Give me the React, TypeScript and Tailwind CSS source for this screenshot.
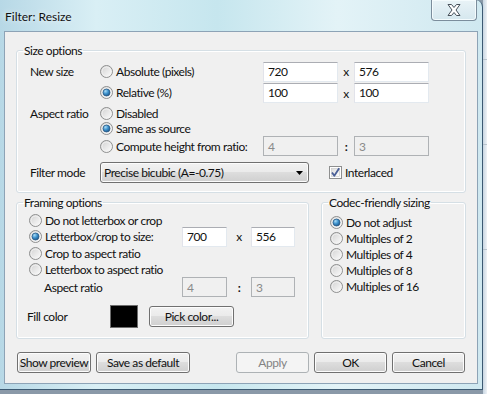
import React from "react";

function Radio({ checked }: { checked?: boolean }) {
  return (
    <svg width="13" height="13" viewBox="0 0 13 13" className="shrink-0">
      <defs>
        <linearGradient id="rg-bg" x1="0" y1="0" x2="1" y2="1">
          <stop offset="0" stopColor="#cfcfcf" />
          <stop offset="1" stopColor="#ffffff" />
        </linearGradient>
        <radialGradient id="rg-dot" cx="0.35" cy="0.3" r="0.8">
          <stop offset="0" stopColor="#a8dcf7" />
          <stop offset="0.5" stopColor="#3a8fcb" />
          <stop offset="1" stopColor="#1c4f80" />
        </radialGradient>
      </defs>
      <circle cx="6.5" cy="6.5" r="6" fill="url(#rg-bg)" stroke="#8e8f8f" strokeWidth="1" />
      <circle cx="6.5" cy="6.5" r="4.5" fill="none" stroke="#f4f4f4" strokeWidth="1" opacity="0.8" />
      {checked && <circle cx="6.5" cy="6.5" r="3.5" fill="url(#rg-dot)" stroke="#2a5a86" strokeWidth="0.8" />}
    </svg>
  );
}

function RadioItem({ checked, label }: { checked?: boolean; label: string }) {
  return (
    <div className="flex items-center gap-[3px] whitespace-nowrap">
      <Radio checked={checked} />
      <span>{label}</span>
    </div>
  );
}

function Field({ value, disabled, w }: { value: string; disabled?: boolean; w: string }) {
  return (
    <div
      className={
        "h-[20px] flex items-center pl-[4px] border shrink-0 " +
        w +
        (disabled
          ? " bg-[#f0f0f0] border-[#afb2b5] text-[#8a8a8a]"
          : " bg-white border-[#abadb3] border-r-[#e3e9ef] border-b-[#e3e9ef] border-l-[#e2e3ea]")
      }
    >
      {value}
    </div>
  );
}

function Btn({ label, w, disabled }: { label: string; w: string; disabled?: boolean }) {
  return (
    <div
      className={
        "h-[21px] flex items-center justify-center rounded-[3px] border shrink-0 whitespace-nowrap " +
        w +
        (disabled
          ? " border-[#adb2b5] bg-[#f4f4f4] text-[#838383]"
          : " border-[#707070] bg-[linear-gradient(#f2f2f2_0%,#ebebeb_45%,#dddddd_50%,#cfcfcf_100%)] shadow-[inset_0_0_0_1px_#fcfcfc]")
      }
    >
      {label}
    </div>
  );
}

function Group({ title, w, children }: { title: string; w: string; children: React.ReactNode }) {
  return (
    <fieldset className={"border border-[#d5dfe5] rounded-[3px] shadow-[inset_0_0_0_1px_#ffffff] p-0 m-0 min-w-0 shrink-0 " + w}>
      <legend className="ml-[6px] px-[1px] leading-[15px]">{title}</legend>
      {children}
    </fieldset>
  );
}

export default function App() {
  return (
    <div
      className="w-[487px] h-[394px] overflow-hidden flex bg-[#8a99a8] text-[12px] leading-[15px] text-[#111]"
      style={{ fontFamily: "Lato, 'Noto Sans', sans-serif" }}
    >
      {/* window */}
      <div className="w-[483px] h-[390px] shrink-0 flex flex-col rounded-tr-[7px] border-r border-b border-[#3c5a73] bg-[linear-gradient(90deg,#b7d8e6_0%,#d9eff5_20%,#c6e6ee_45%,#e3f3f7_70%,#cfe8f0_100%)]">
        {/* title bar */}
        <div className="h-[31px] shrink-0 flex items-start">
          <div className="pl-[5px] pt-[9px] text-[12px] whitespace-nowrap [text-shadow:0_0_6px_#ffffff]">Filter: Resize</div>
          <div className="ml-auto mr-[5px] w-[46px] h-[21px] rounded-b-[4px] border border-t-0 border-[#7b8d9c] bg-[linear-gradient(#e9f3f7,#d5e7ee)] shadow-[inset_0_0_0_1px_#f4fbfd] flex items-center justify-center">
            <svg width="16" height="14" viewBox="0 0 16 14">
              <path
                d="M2 1.5 L5.5 1.5 L8 4.5 L10.5 1.5 L14 1.5 L10 7 L14 12.5 L10.5 12.5 L8 9.5 L5.5 12.5 L2 12.5 L6 7 Z"
                fill="#ffffff"
                stroke="#47505a"
                strokeWidth="1"
                strokeLinejoin="round"
              />
            </svg>
          </div>
        </div>
        {/* client */}
        <div className="ml-[4px] w-[474px] h-[353px] shrink-0 bg-[#f0f0f0] border border-[#8da3b6] flex flex-col pl-[11px] pt-[11px] tracking-[-0.45px]">
          {/* Size options */}
          <Group title="Size options" w="w-[450px]">
            <div className="pl-[13px] pb-[9px] flex flex-col">
              <div className="mt-[3px] h-[21px] flex items-center">
                <div className="w-[70px]">New size</div>
                <div className="w-[163px]"><RadioItem label="Absolute (pixels)" /></div>
                <Field value="720" w="w-[75px]" />
                <div className="w-[16px] text-center">x</div>
                <Field value="576" w="w-[75px]" />
              </div>
              <div className="h-[21px] flex items-center">
                <div className="w-[70px]" />
                <div className="w-[163px]"><RadioItem checked label="Relative (%)" /></div>
                <Field value="100" w="w-[75px]" />
                <div className="w-[16px] text-center pt-[2px]">x</div>
                <Field value="100" w="w-[75px]" />
              </div>
              <div className="mt-[2px] h-[16px] flex items-center">
                <div className="w-[70px]">Aspect ratio</div>
                <RadioItem label="Disabled" />
              </div>
              <div className="h-[15px] flex items-center">
                <div className="w-[70px]" />
                <RadioItem checked label="Same as source" />
              </div>
              <div className="h-[20px] flex items-center">
                <div className="w-[70px]" />
                <div className="w-[163px]"><RadioItem label="Compute height from ratio:" /></div>
                <Field value="4" disabled w="w-[75px]" />
                <div className="w-[16px] text-center font-bold">:</div>
                <Field value="3" disabled w="w-[75px]" />
              </div>
              <div className="mt-[6px] h-[21px] flex items-center">
                <div className="w-[70px]">Filter mode</div>
                <div className="w-[209px] h-[21px] rounded-[3px] border border-[#707070] bg-[linear-gradient(#f2f2f2_0%,#ebebeb_45%,#dddddd_50%,#cfcfcf_100%)] shadow-[inset_0_0_0_1px_#fcfcfc] flex items-center pl-[3px] pr-[5px] whitespace-nowrap">
                  <span>Precise bicubic (A=-0.75)</span>
                  <svg width="7" height="4" viewBox="0 0 7 4" className="ml-auto">
                    <path d="M0 0 H7 L3.5 4 Z" fill="#000" />
                  </svg>
                </div>
                <div className="ml-[20px] flex items-center gap-[3px]">
                  <svg width="13" height="13" viewBox="0 0 13 13">
                    <defs>
                      <linearGradient id="cb-bg" x1="0" y1="0" x2="1" y2="1">
                        <stop offset="0" stopColor="#dcdcdc" />
                        <stop offset="1" stopColor="#ffffff" />
                      </linearGradient>
                    </defs>
                    <rect x="0.5" y="0.5" width="12" height="12" fill="#ffffff" stroke="#8e8f8f" />
                    <rect x="2.5" y="2.5" width="8" height="8" fill="url(#cb-bg)" stroke="#c6c6c6" strokeWidth="0.6" />
                    <path d="M3 6.5 L5.3 9.8 L10.2 2.2" fill="none" stroke="#4a5f97" strokeWidth="1.8" strokeLinejoin="round" />
                  </svg>
                  <span>Interlaced</span>
                </div>
              </div>
            </div>
          </Group>

          <div className="mt-[2px] flex gap-[12px]">
            {/* Framing options */}
            <Group title="Framing options" w="w-[293px]">
              <div className="pl-[12px] pt-[2px] pb-[11px] flex flex-col">
                <div className="h-[16px] flex items-center"><RadioItem label="Do not letterbox or crop" /></div>
                <div className="h-[17px] flex items-center">
                  <div className="w-[153px]"><RadioItem checked label="Letterbox/crop to size:" /></div>
                  <Field value="700" w="w-[45px]" />
                  <div className="w-[24px] text-center">x</div>
                  <Field value="556" w="w-[44px]" />
                </div>
                <div className="h-[16px] flex items-center"><RadioItem label="Crop to aspect ratio" /></div>
                <div className="h-[16px] flex items-center"><RadioItem label="Letterbox to aspect ratio" /></div>
                <div className="h-[20px] flex items-center">
                  <div className="w-[153px] pl-[15px]">Aspect ratio</div>
                  <Field value="4" disabled w="w-[45px]" />
                  <div className="w-[24px] text-center font-bold">:</div>
                  <Field value="3" disabled w="w-[44px]" />
                </div>
                <div className="mt-[8px] h-[22px] flex items-center">
                  <div className="w-[83px] -ml-[2px]">Fill color</div>
                  <div className="w-[28px] h-[23px] bg-black border border-[#6d6d6d]" />
                  <Btn label="Pick color..." w="w-[85px] ml-[11px]" />
                </div>
              </div>
            </Group>

            {/* Codec-friendly sizing */}
            <Group title="Codec-friendly sizing" w="w-[145px]">
              <div className="pl-[8px] pt-[4px] flex flex-col">
                <div className="h-[16px] flex items-center"><RadioItem checked label="Do not adjust" /></div>
                <div className="h-[16px] flex items-center"><RadioItem label="Multiples of 2" /></div>
                <div className="h-[16px] flex items-center"><RadioItem label="Multiples of 4" /></div>
                <div className="h-[16px] flex items-center"><RadioItem label="Multiples of 8" /></div>
                <div className="h-[16px] flex items-center"><RadioItem label="Multiples of 16" /></div>
              </div>
            </Group>
          </div>

          {/* buttons */}
          <div className="mt-[13px] flex items-center pl-[1px] pr-[12px]">
            <Btn label="Show preview" w="w-[74px]" />
            <Btn label="Save as default" w="w-[94px] ml-[5px]" />
            <Btn label="Apply" disabled w="w-[73px] ml-[46px]" />
            <Btn label="OK" w="w-[73px] ml-[5px]" />
            <Btn label="Cancel" w="w-[73px] ml-[5px]" />
          </div>
        </div>
      </div>
      {/* window behind */}
      <div className="flex-1 h-[394px] bg-[linear-gradient(90deg,#c8d6e2,#eef2f6)] flex flex-col">
        <div className="h-[60px] border-b border-[#b9c4ce]" />
        <div className="h-[85px] border-b border-[#b9c4ce]" />
        <div className="h-[105px] border-b border-[#b9c4ce]" />
      </div>
    </div>
  );
}
